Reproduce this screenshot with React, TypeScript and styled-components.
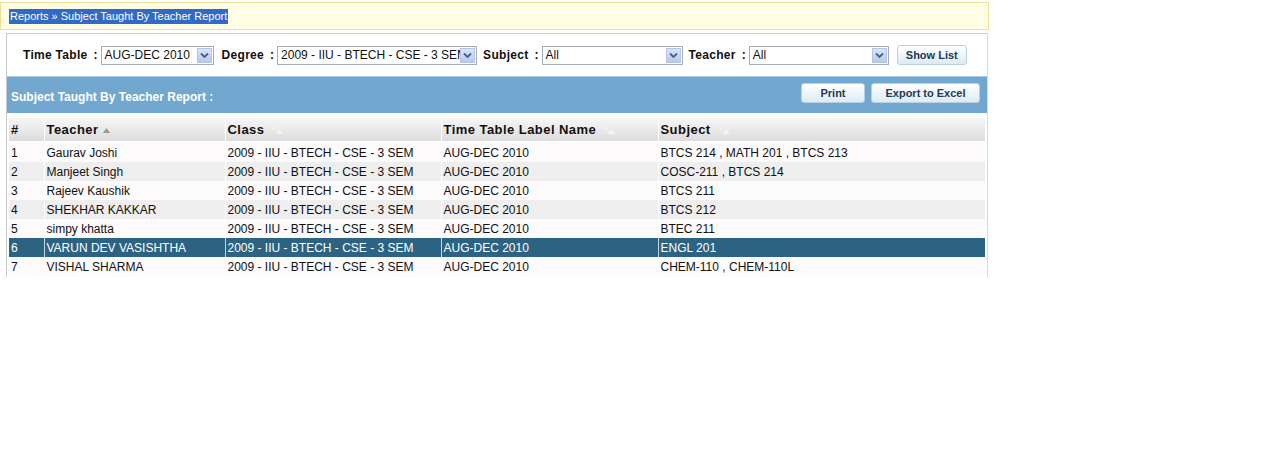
import React from "react";
import styled, { createGlobalStyle } from "styled-components";

const Global = createGlobalStyle`
  html, body { margin: 0; padding: 0; background: #fff; }
  body { font-family: "Liberation Sans", Arial, sans-serif; }
`;

const Page = styled.div`
  width: 1280px;
  height: 450px;
  padding-top: 2px;
  box-sizing: border-box;
`;

const Breadcrumb = styled.div`
  width: 989px;
  height: 28px;
  box-sizing: border-box;
  background: #fffde4;
  border: 1px solid #f4df9a;
  display: flex;
  align-items: center;
  padding-left: 8px;
  font-size: 11px;
`;

const Selected = styled.span`
  background: #3169c6;
  color: #fff;
  padding: 1px;
  line-height: 13px;
`;

const Container = styled.div`
  margin: 3px 0 0 6px;
  width: 982px;
  box-sizing: border-box;
  border-left: 1px solid #c8c8c8;
  border-right: 1px solid #d8d8d8;
  border-top: 1px solid #d0d0d0;
  padding-bottom: 1px;
`;

const Filters = styled.div`
  height: 42px;
  display: flex;
  align-items: center;
  padding-left: 16px;
  font-size: 12px;
`;

const Label = styled.span`
  font-weight: bold;
  color: #111;
  white-space: nowrap;
  letter-spacing: 0.3px;
`;

const Colon = styled.span`
  font-weight: bold;
  margin: 0 3px 0 6px;
`;

const SelectBox = styled.div<{ $w: number; $gap: number }>`
  width: ${(p) => p.$w}px;
  height: 19px;
  box-sizing: border-box;
  border: 1px solid #a5acb5;
  display: flex;
  align-items: center;
  margin-right: ${(p) => p.$gap}px;
  background: #fff;
`;

const SelectText = styled.span`
  flex: 1;
  padding-left: 3px;
  font-size: 12px;
  color: #111;
  overflow: hidden;
  white-space: nowrap;
`;

const Arrow = styled.span`
  width: 15px;
  height: 15px;
  margin-right: 1px;
  background: linear-gradient(#d9e4f7, #b6c9ee);
  border: 1px solid #b3c5e8;
  box-sizing: border-box;
  display: flex;
  align-items: center;
  justify-content: center;
  flex-shrink: 0;
`;

const LightButton = styled.button<{ $w: number }>`
  width: ${(p) => p.$w}px;
  height: 20px;
  border: 1px solid #b8d0e4;
  border-radius: 3px;
  background: linear-gradient(#ffffff, #dcebf6);
  font-family: "Liberation Sans", Arial, sans-serif;
  font-weight: bold;
  font-size: 11px;
  color: #1e3a56;
  padding: 0;
  cursor: pointer;
`;

const ReportBar = styled.div`
  height: 37px;
  background: #72a8d0;
  border-top: 1px solid #a9cbe4;
  box-sizing: border-box;
  display: flex;
  align-items: center;
  padding: 0 7px 0 4px;
`;

const ReportTitle = styled.div`
  flex: 1;
  color: #fff;
  font-weight: bold;
  font-size: 12px;
  margin-top: 3px;
`;

const Buttons = styled.div`
  display: flex;
  gap: 6px;
  margin-top: -4px;
`;

const Table = styled.table`
  margin: 5px 0 0 2px;
  width: 976px;
  border-collapse: collapse;
  font-size: 12px;
  table-layout: fixed;
`;

const Th = styled.th`
  height: 23px;
  text-align: left;
  padding: 0 0 0 2px;
  background: linear-gradient(#f6f6f6, #dcdcdc);
  border-left: 1px solid #fff;
  font-size: 13px;
  letter-spacing: 0.45px;
  color: #111;
  white-space: nowrap;
  overflow: hidden;
  &:first-child { border-left: none; }
`;

const Tr = styled.tr<{ $variant: "odd" | "even" | "sel" }>`
  height: 19px;
  background: ${(p) => (p.$variant === "sel" ? "#2d6382" : p.$variant === "even" ? "#eeeeee" : "#fcfafb")};
  color: ${(p) => (p.$variant === "sel" ? "#fff" : "#111")};
  td { border-left: 1px solid ${(p) => (p.$variant === "sel" ? "#c6d6e0" : "transparent")}; }
  td:first-child { border-left: none; }
`;

const Td = styled.td`
  padding: 0 0 0 2px;
  white-space: nowrap;
  overflow: hidden;
`;

const Spacer = styled.tr`
  height: 2px;
`;

const SortIcon = ({ active }: { active?: boolean }) =>
  active ? (
    <svg width="9" height="8" viewBox="0 0 9 8" style={{ marginLeft: 3, verticalAlign: "middle" }}>
      <path d="M4.5 1 L8 6 L1 6 Z" fill="#9a9a9a" />
    </svg>
  ) : (
    <svg width="14" height="10" viewBox="0 0 14 10" style={{ marginLeft: 6, verticalAlign: "middle" }}>
      <path d="M1 1 L7 1 L4 5 Z" fill="#f2f2f2" />
      <path d="M5 8 L13 8 L9 3 Z" fill="#f4f4f4" />
    </svg>
  );

const Chevron = () => (
  <svg width="9" height="7" viewBox="0 0 9 7">
    <path d="M1 1.5 L4.5 5 L8 1.5" stroke="#4d6185" strokeWidth="1.8" fill="none" />
  </svg>
);

const Select = ({ w, gap, value }: { w: number; gap: number; value: string }) => (
  <SelectBox $w={w} $gap={gap}>
    <SelectText>{value}</SelectText>
    <Arrow>
      <Chevron />
    </Arrow>
  </SelectBox>
);

const rows = [
  ["1", "Gaurav Joshi", "2009 - IIU - BTECH - CSE - 3 SEM", "AUG-DEC 2010", "BTCS 214 , MATH 201 , BTCS 213"],
  ["2", "Manjeet Singh", "2009 - IIU - BTECH - CSE - 3 SEM", "AUG-DEC 2010", "COSC-211 , BTCS 214"],
  ["3", "Rajeev Kaushik", "2009 - IIU - BTECH - CSE - 3 SEM", "AUG-DEC 2010", "BTCS 211"],
  ["4", "SHEKHAR KAKKAR", "2009 - IIU - BTECH - CSE - 3 SEM", "AUG-DEC 2010", "BTCS 212"],
  ["5", "simpy khatta", "2009 - IIU - BTECH - CSE - 3 SEM", "AUG-DEC 2010", "BTEC 211"],
  ["6", "VARUN DEV VASISHTHA", "2009 - IIU - BTECH - CSE - 3 SEM", "AUG-DEC 2010", "ENGL 201"],
  ["7", "VISHAL SHARMA", "2009 - IIU - BTECH - CSE - 3 SEM", "AUG-DEC 2010", "CHEM-110 , CHEM-110L"],
];

const colWidths = [35, 181, 216, 217, 327];

export default function App() {
  return (
    <Page>
      <Global />
      <Breadcrumb>
        <Selected>Reports » Subject Taught By Teacher Report</Selected>
      </Breadcrumb>
      <Container>
        <Filters>
          <Label>Time Table</Label>
          <Colon>:</Colon>
          <Select w={113} gap={8} value="AUG-DEC 2010" />
          <Label>Degree</Label>
          <Colon>:</Colon>
          <Select w={200} gap={6} value="2009 - IIU - BTECH - CSE - 3 SEM" />
          <Label>Subject</Label>
          <Colon>:</Colon>
          <Select w={141} gap={6} value="All" />
          <Label>Teacher</Label>
          <Colon>:</Colon>
          <Select w={140} gap={8} value="All" />
          <LightButton $w={70}>Show List</LightButton>
        </Filters>
        <ReportBar>
          <ReportTitle>Subject Taught By Teacher Report :</ReportTitle>
          <Buttons>
            <LightButton $w={64}>Print</LightButton>
            <LightButton $w={109}>Export to Excel</LightButton>
          </Buttons>
        </ReportBar>
        <Table>
          <colgroup>
            {colWidths.map((w, i) => (
              <col key={i} style={{ width: w }} />
            ))}
          </colgroup>
          <thead>
            <tr>
              <Th>#</Th>
              <Th>
                Teacher
                <SortIcon active />
              </Th>
              <Th>
                Class
                <SortIcon />
              </Th>
              <Th>
                Time Table Label Name
                <SortIcon />
              </Th>
              <Th>
                Subject
                <SortIcon />
              </Th>
            </tr>
          </thead>
          <tbody>
            <Spacer />
            {rows.map((r, i) => (
              <Tr key={r[0]} $variant={i === 5 ? "sel" : i % 2 === 1 ? "even" : "odd"}>
                {r.map((c, j) => (
                  <Td key={j}>{c}</Td>
                ))}
              </Tr>
            ))}
          </tbody>
        </Table>
      </Container>
    </Page>
  );
}
